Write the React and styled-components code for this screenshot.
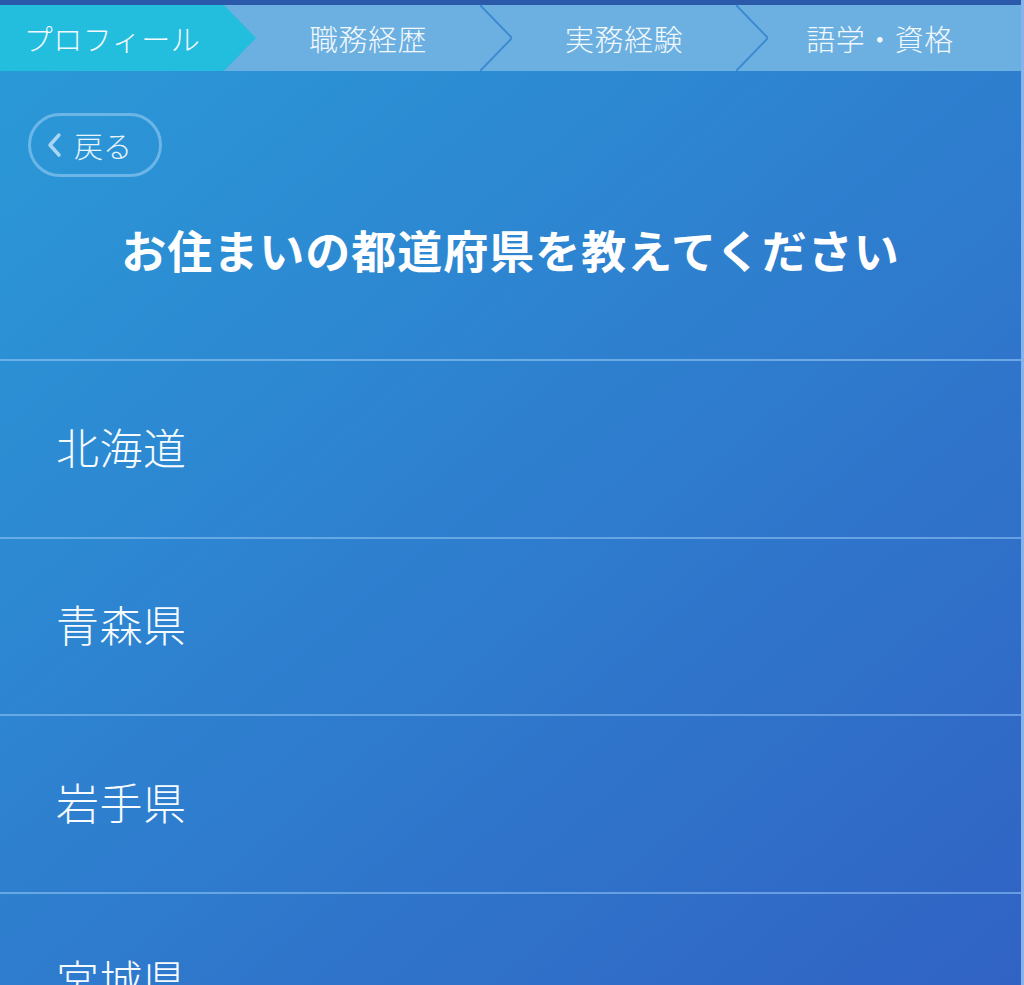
import styled, { createGlobalStyle } from "styled-components";

const GlobalStyle = createGlobalStyle`
  body {
    margin: 0;
    font-family: "Noto Sans CJK JP", "Noto Sans", sans-serif;
  }
`;

const Page = styled.div`
  min-height: 985px;
  overflow: hidden;
  background: linear-gradient(140deg, #2a9bd8 0%, #2e80cf 45%, #3160c3 100%);
  border-right: 3px solid #86b3ec;
  box-sizing: border-box;
  color: #fff;
`;

const TopBand = styled.div`
  height: 5px;
  background: #2c5aab;
`;

const TabBar = styled.div`
  display: flex;
  height: 66px;
  background: #6cb0e1;
`;

const Tab = styled.div`
  flex: none;
  display: flex;
  width: 256px;
  height: 100%;
  background: ${(p) => (p.active ? "#23bddd" : "transparent")};
  clip-path: ${(p) =>
    p.active
      ? "polygon(0 0, 224px 0, 100% 50%, 224px 100%, 0 100%)"
      : "none"};
`;

const TabLabel = styled.div`
  width: 224px;
  display: flex;
  align-items: center;
  justify-content: center;
  font-size: 29px;
  font-weight: 300;
  color: #f2f9fd;
  letter-spacing: 0.5px;
`;

const Chevron = styled.svg`
  flex: none;
  width: 32px;
  height: 100%;
`;

const Header = styled.div`
  height: 290px;
  padding: 42px 0 0 28px;
  box-sizing: border-box;
  border-bottom: 2px solid rgba(150, 200, 245, 0.6);
`;

const BackButton = styled.button`
  display: flex;
  align-items: center;
  gap: 12px;
  width: 134px;
  height: 64px;
  padding: 0 0 0 15px;
  box-sizing: border-box;
  border: 3px solid rgba(160, 210, 245, 0.55);
  border-radius: 32px;
  background: transparent;
  color: #e8f4fc;
  font-family: inherit;
  font-size: 29px;
  font-weight: 300;
  cursor: pointer;
  svg {
    width: 16px;
    height: 28px;
  }
`;

const Title = styled.h1`
  margin: 48px 0 0 -28px;
  text-align: center;
  font-size: 45px;
  font-weight: 700;
  letter-spacing: 1px;
  line-height: 1.1;
`;

const List = styled.ul`
  list-style: none;
  margin: 0;
  padding: 0;
`;

const Item = styled.li`
  display: flex;
  align-items: center;
  height: 175.5px;
  padding: 0 0 6px 56px;
  box-sizing: content-box;
  height: 169.5px;
  border-bottom: 2px solid rgba(150, 200, 245, 0.55);
  font-size: 43px;
  font-weight: 300;
  color: #f6fbff;
  letter-spacing: 0.5px;
`;

const tabs = ["プロフィール", "職務経歴", "実務経験", "語学・資格"];
const prefs = ["北海道", "青森県", "岩手県", "宮城県"];

export default function App() {
  return (
    <>
      <GlobalStyle />
      <Page>
        <TopBand />
        <TabBar>
          {tabs.map((t, i) => (
            <Tab key={t} active={i === 0}>
              <TabLabel>{t}</TabLabel>
              {i > 0 && i < tabs.length - 1 && (
                <Chevron viewBox="0 0 32 66" preserveAspectRatio="none">
                  <polyline
                    points="0,0 32,33 0,66"
                    fill="none"
                    stroke="#3c8ad2"
                    strokeWidth="2"
                  />
                </Chevron>
              )}
            </Tab>
          ))}
        </TabBar>
        <Header>
          <BackButton>
            <svg viewBox="0 0 16 28">
              <polyline
                points="13,4 4,14 13,24"
                fill="none"
                stroke="#a8d6f2"
                strokeWidth="3.5"
                strokeLinecap="round"
                strokeLinejoin="round"
              />
            </svg>
            戻る
          </BackButton>
          <Title>お住まいの都道府県を教えてください</Title>
        </Header>
        <List>
          {prefs.map((p) => (
            <Item key={p}>{p}</Item>
          ))}
        </List>
      </Page>
    </>
  );
}
